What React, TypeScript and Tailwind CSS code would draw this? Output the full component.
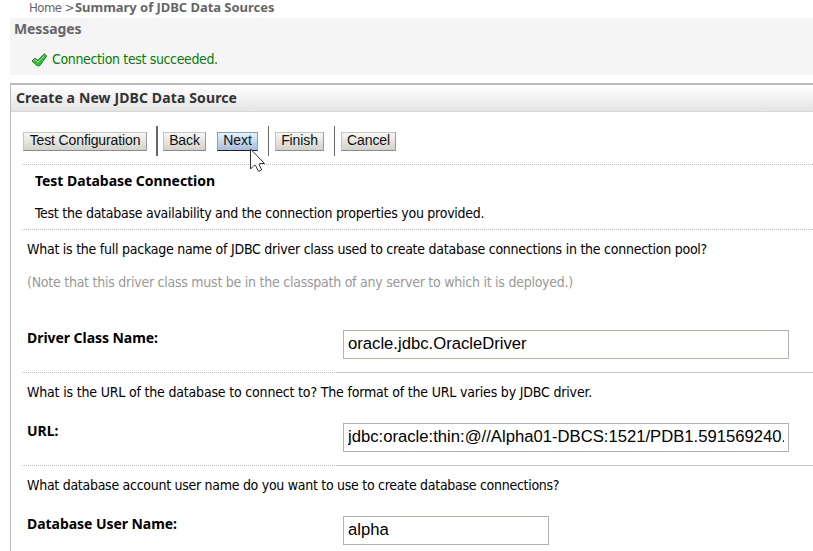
import type { ReactNode } from 'react';

function ActionButton({ children, className, active = false }: { children: ReactNode; className: string; active?: boolean }) {
  const tone = active
    ? 'border-[#8ba0b8] border-b-[#222] bg-linear-to-b from-[#e2f3fb] to-[#a9bce0]'
    : 'border-[#c4c4c0] border-r-[#9b9b9b] border-b-[#8b8b8b] bg-linear-to-b from-[#f7f7f4] to-[#d2d3cc]';
  return (
    <button
      type="button"
      className={`flex h-[19px] shrink-0 items-center justify-center border pb-[3px] font-['Liberation_Sans',sans-serif] text-[14px] leading-none whitespace-nowrap text-[#111] ${tone} ${className}`}
    >
      {children}
    </button>
  );
}

function Rule() {
  return (
    <div className="ml-[11px] h-px bg-[repeating-linear-gradient(to_right,#bdbdbd_0,#bdbdbd_1px,#fff_1px,#fff_2px)]" />
  );
}

function FieldRule() {
  return (
    <div className="ml-[11px] flex h-px">
      <div className="w-[314px] bg-[repeating-linear-gradient(to_right,#bdbdbd_0,#bdbdbd_1px,#fff_1px,#fff_2px)]" />
      <div className="flex-1 bg-[#c8c8c8]" />
    </div>
  );
}

function Field({ label, value, width }: { label: string; value: string; width: string }) {
  return (
    <div className="flex h-[29px] pl-4">
      <label className="w-[316px] shrink-0 font-['Noto_Sans',sans-serif] text-[14px] leading-[16px] font-bold tracking-[-0.05px]">{label}</label>
      <input
        readOnly
        value={value}
        className={`h-[29px] border border-[#b3b3ae] bg-white pr-[4px] pb-[2px] pl-1 font-['Liberation_Sans',sans-serif] text-[16.67px] tracking-normal text-black outline-none ${width}`}
      />
    </div>
  );
}

export default function App() {
  return (
    <div className="h-[551px] w-[813px] overflow-hidden bg-white pl-[10px] font-['DejaVu_Sans_Condensed',sans-serif] text-[14px] leading-[18px] tracking-[-0.25px] whitespace-nowrap text-black">
      <nav className="flex h-[18px] pl-[19px] text-[13px] leading-[15px] text-[#666]">
        <span className="w-[46px] tracking-[-0.5px]">Home &gt;</span>
        <span className="font-['Noto_Sans',sans-serif] font-bold tracking-[-0.04px]">Summary of JDBC Data Sources</span>
      </nav>

      <section className="h-[57px] bg-[#f5f5f5]">
        <h2 className="h-[30px] pl-1 font-['Noto_Sans',sans-serif] leading-[22px] font-bold tracking-[-0.1px] text-[#666]">Messages</h2>
        <div className="flex pl-[21px] text-[#008000]">
          <svg width="17" height="16" viewBox="0 0 17 16" className="mt-[4px] mr-[4px]">
            <path d="M1 9 3.8 6.3 7 8.3 13.2 1.8 15.8 4 8.6 13.8H6.2z" fill="#2fbf35" stroke="#35703a" strokeWidth="1" strokeLinejoin="round" />
            <path d="m2.8 8.7 1.4-.9L7.2 10l6.2-6.4" fill="none" stroke="#86e878" />
          </svg>
          <span className="leading-[22px] tracking-[-0.36px]">Connection test succeeded.</span>
        </div>
      </section>

      <main className="mt-2 h-[468px] border-t-2 border-l border-[#b8bcbc]">
        <h1 className="h-[27px] border-b border-[#d8d8d8] bg-linear-to-b from-white to-[#e4e4e4] pl-[5px] font-['Noto_Sans',sans-serif] leading-[26px] font-bold tracking-[0.12px] text-[#333]">Create a New JDBC Data Source</h1>

        <div className="flex h-[52px] items-start pt-[14px] pl-3">
          <div className="flex h-[30px] items-center">
            <ActionButton className="w-[124px] tracking-[-0.12px]">Test Configuration</ActionButton>
            <div className="mr-[5px] ml-[9px] h-[30px] w-[2px] bg-[#666]" />
            <ActionButton className="w-[43px] tracking-[-0.1px]">Back</ActionButton>
            <div className="relative ml-[11px]">
              <ActionButton active className="w-[41px] tracking-[-0.1px]">Next</ActionButton>
              <svg width="16" height="26" viewBox="0 0 16 26" className="absolute top-[16px] left-[33px]">
                <path d="M.5 1v20l3.6-3.6h1.4l3 6 3.2-1.5-2.8-5.6 1-.8h4.6z" fill="#fff" stroke="#33333a" />
              </svg>
            </div>
            <div className="mr-[6px] ml-[10px] h-[30px] w-px bg-[#666]" />
            <ActionButton className="w-[49px] tracking-[-0.1px]">Finish</ActionButton>
            <div className="mr-[6px] ml-[10px] h-[30px] w-px bg-[#666]" />
            <ActionButton className="w-[55px] tracking-[-0.1px]">Cancel</ActionButton>
          </div>
        </div>

        <Rule />
        <section className="h-[64px] pl-6">
          <h3 className="h-[32px] font-['Noto_Sans',sans-serif] leading-[32px] font-bold tracking-[-0.05px]">Test Database Connection</h3>
          <p className="leading-[32px] tracking-[-0.26px]">Test the database availability and the connection properties you provided.</p>
        </section>

        <Rule />
        <section className="h-[142px] pt-[10px]">
          <p className="pl-4">What is the full package name of JDBC driver class used to create database connections in the connection pool?</p>
          <p className="mt-[15px] mb-[39px] pl-4 text-[#999]">(Note that this driver class must be in the classpath of any server to which it is deployed.)</p>
          <Field label="Driver Class Name:" value="oracle.jdbc.OracleDriver" width="w-[446px]" />
        </section>

        <FieldRule />
        <section className="h-[92px] pt-[10px]">
          <p className="mb-[22px] pl-4 tracking-[-0.18px]">What is the URL of the database to connect to? The format of the URL varies by JDBC driver.</p>
          <Field label="URL:" value="jdbc:oracle:thin:@//Alpha01-DBCS:1521/PDB1.591569240." width="w-[446px]" />
        </section>

        <FieldRule />
        <section className="pt-[10px]">
          <p className="mb-[22px] pl-4 tracking-[-0.28px]">What database account user name do you want to use to create database connections?</p>
          <Field label="Database User Name:" value="alpha" width="w-[206px]" />
        </section>
      </main>
    </div>
  );
}
